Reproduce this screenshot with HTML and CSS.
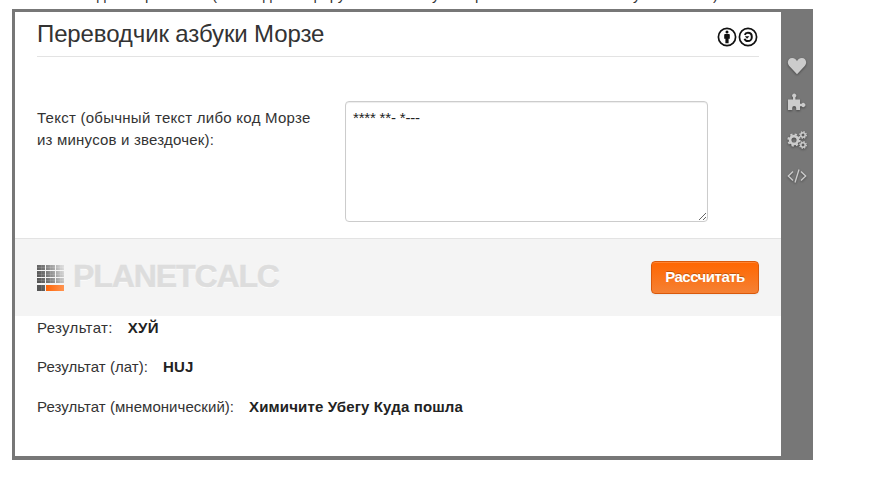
FILE: index.html
```html
<!DOCTYPE html>
<html lang="ru">
<head>
<meta charset="utf-8">
<title>Переводчик азбуки Морзе</title>
<link rel="stylesheet" href="styles.css">
</head>
<body>
<p class="intro"><span class="w1">основа</span><span class="w2">для не</span><span class="w3">ресеков</span><span class="w4">(они не</span><span class="w5">да и не</span><span class="w6">форумы из текста</span><span class="w7">у нас</span><span class="w8">разных или своих зн</span><span class="w9">у из знаков</span><span>)</span></p>
<main class="calc">
  <div class="panel">
    <header class="head">
      <h1>Переводчик азбуки Морзе</h1>
      <div class="license">
        <svg width="20" height="20" viewBox="0 0 20 20"><circle cx="10" cy="10" r="8.6" fill="#fff" stroke="#111" stroke-width="1.7"/><circle cx="10" cy="4.9" r="1.5" fill="#111"/><path d="M7.2 7.8q0-.9.9-.9h3.8q.9 0 .9.9v4h-1.2v4.400H8.4v-4.400H7.200z" fill="#111"/></svg>
        <svg width="20" height="20" viewBox="0 0 20 20"><circle cx="10" cy="10" r="8.6" fill="#fff" stroke="#111" stroke-width="1.7"/><path d="M6.800 7.800C7.300 6.500 8.400 5.800 9.900 5.800c2.400 0 3.900 1.800 3.900 4.100s-1.500 4.200-3.900 4.200c-1.700 0-2.900-.9-3.300-2.400" fill="none" stroke="#111" stroke-width="2"/><path d="M6.800 9.300h4.600L9.100 11.700z" fill="#111"/></svg>
      </div>
    </header>
    <div class="field">
      <label for="code"><span class="wide">Текст (обычный текст либо код Морзе</span><br><span class="mid">из минусов и звездочек):</span></label>
      <textarea id="code" spellcheck="false">**** **- *---</textarea>
    </div>
    <div class="actions">
      <div class="brand">
        <svg class="logo" width="27" height="27" viewBox="0 0 27 27">
          <defs>
            <linearGradient id="g" gradientUnits="userSpaceOnUse" x1="0" y1="14" x2="27" y2="5"><stop offset="0" stop-color="#555"/><stop offset=".35" stop-color="#777"/><stop offset="1" stop-color="#ddd"/></linearGradient>
            <linearGradient id="o"><stop offset="0" stop-color="#ff6508"/><stop offset="1" stop-color="#ff9450"/></linearGradient>
          </defs>
          <path fill="url(#g)" d="M0 1h8v5H0zM9 1h9v5H9zM19 1h8v5h-8zM0 7h8v6H0zM9 7h9v6H9zM19 7h8v6h-8zM0 14h8v5H0zM9 14h9v5H9zM19 14h8v5h-8zM0 21h8v6H0z"/>
          <path d="M0 3.500h27M0 10.500h27M0 16.500h27M4.500 1v26M13.500 1v18M23.500 1v18" stroke="#fff" stroke-opacity=".12"/>
          <path fill="url(#o)" d="M9 21h18v6H9z"/>
        </svg>
        <span class="name">PLANETCALC</span>
      </div>
      <button type="button">Рассчитать</button>
    </div>
    <dl class="results">
      <div><dt class="first">Результат:</dt><dd class="upper">ХУЙ</dd></div>
      <div><dt>Результат (лат):</dt><dd>HUJ</dd></div>
      <div><dt>Результат (мнемонический):</dt><dd>Химичите Убегу Куда пошла</dd></div>
    </dl>
  </div>
  <nav class="tools">
    <svg width="20" height="20" viewBox="0 0 20 20"><path d="M10 18.200 2.500 10.300C-.8 6.500 1.300 2 5.100 2 7.600 2 9.300 3.500 10 5.200 10.700 3.500 12.400 2 14.900 2c3.800 0 5.900 4.500 2.600 8.300z"/></svg>
    <svg width="20" height="20" viewBox="0 0 20 20"><path d="M1 6.500h5V4.300a2 2 0 1 1 2.400 0v2.200H13v4.300h1.700a2 2 0 1 1 0 2.400H13V17H9.200v-2.100a2 2 0 1 0-4 0V17H1V6.500z"/></svg>
    <svg width="20" height="20" viewBox="0 0 20 20"><g fill="none"><circle cx="7" cy="10" r="3.900" stroke-width="2.700"/><circle cx="7" cy="10" r="5.700" stroke-width="1.900" stroke-dasharray="2.240 2.240"/><circle cx="16" cy="5" r="2.200" stroke-width="1.500"/><circle cx="16" cy="5" r="3.300" stroke-width="1.300" stroke-dasharray="1.300 1.300"/><circle cx="16" cy="15" r="2.200" stroke-width="1.500"/><circle cx="16" cy="15" r="3.300" stroke-width="1.300" stroke-dasharray="1.300 1.300"/></g></svg>
    <svg width="20" height="20" viewBox="0 0 20 20"><path d="M6 4.500 1.300 9 6 13.500M14 4.500l4.700 4.500-4.700 4.500M12 2.500 8 15.500" fill="none" stroke-width="1.300"/></svg>
  </nav>
</main>
</body>
</html>
```
FILE: styles.css
```css
body {
  margin: 0;
  height: 483px;
  overflow: hidden;
  background: #fff;
  color: #333;
  font: 15px/22px "Liberation Sans", Arial, sans-serif;
}
.intro {
  display: flex;
  margin: -16px 0 0 44px;
  height: 25px;
  white-space: nowrap;
}
.w1 { width: 53px; }
.w2 { width: 48px; }
.w3 { width: 67px; }
.w4 { width: 51px; }
.w5 { width: 46px; }
.w6 { width: 123px; }
.w7 { width: 43px; }
.w8 { width: 158px; }
.w9 { width: 80px; }
.calc {
  display: flex;
  box-sizing: border-box;
  width: 801px;
  height: 451px;
  margin-left: 12px;
  border: 3px solid #777;
  border-right: 0;
  border-bottom-width: 4px;
}
.panel { width: 766px; background: #fff; }
.head {
  display: flex;
  justify-content: space-between;
  box-sizing: border-box;
  height: 45px;
  margin: 0 22px;
  border-bottom: 1px solid #e3e3e3;
}
h1 {
  margin: 4px 0 0;
  font-size: 24px;
  line-height: 36px;
  font-weight: 400;
  letter-spacing: -.12px;
}
.license {
  display: flex;
  gap: 1px;
  margin: 14.500px 1.500px 0 0;
}
.field {
  display: flex;
  box-sizing: border-box;
  height: 181px;
  padding: 44px 22px 0;
}
label {
  width: 308px;
  padding-top: 6px;
  white-space: nowrap;
}
.wide { letter-spacing: .26px; }
.mid { letter-spacing: .2px; }
textarea {
  box-sizing: border-box;
  width: 363px;
  height: 121px;
  margin: 0;
  padding: 5px 7px;
  border: 1px solid #ccc;
  border-radius: 4px;
  box-shadow: inset 0 1px 1px rgba(0, 0, 0, .075);
  color: #222;
  font: inherit;
  letter-spacing: -.18px;
}
.actions {
  display: flex;
  align-items: center;
  justify-content: space-between;
  box-sizing: border-box;
  height: 78px;
  padding: 0 22px;
  border-top: 1px solid #e3e3e3;
  background: #f4f4f4;
}
.brand { display: flex; align-items: center; gap: 9px; }
.name {
  margin-top: -4px;
  color: #ddd;
  font-size: 32px;
  font-weight: 700;
  letter-spacing: -1.1px;
  -webkit-text-stroke: .5px #ddd;
  text-shadow: 0 1px 0 #fff;
}
button {
  width: 108px;
  height: 33px;
  padding: 0 0 2px;
  border: 1px solid #d9590b;
  border-radius: 4px;
  background: linear-gradient(#ff6600, #f58134);
  box-shadow: inset 0 1px 0 rgba(255, 255, 255, .2), 0 1px 2px rgba(0, 0, 0, .05);
  color: #fff;
  font: 700 15px/20px "Liberation Sans", Arial, sans-serif;
  letter-spacing: -.5px;
  text-shadow: 0 -1px 0 rgba(0, 0, 0, .25);
  white-space: nowrap;
}
.results { margin: 0; padding: 1px 22px; }
.results div { display: flex; gap: 15px; height: 39.400px; white-space: nowrap; }
dt { letter-spacing: .05px; }
.first { letter-spacing: .33px; }
dd { margin: 0; color: #222; font-weight: 700; letter-spacing: .14px; }
.upper { letter-spacing: .4px; }
.tools {
  display: flex;
  flex-direction: column;
  align-items: center;
  gap: 17px;
  width: 32px;
  padding-top: 44px;
  box-sizing: border-box;
  background: #777;
}
.tools svg { fill: #ccc; filter: drop-shadow(0 1px 1px rgba(0, 0, 0, .4)); }
.tools g, .tools path[fill="none"] { stroke: #ccc; }
```
